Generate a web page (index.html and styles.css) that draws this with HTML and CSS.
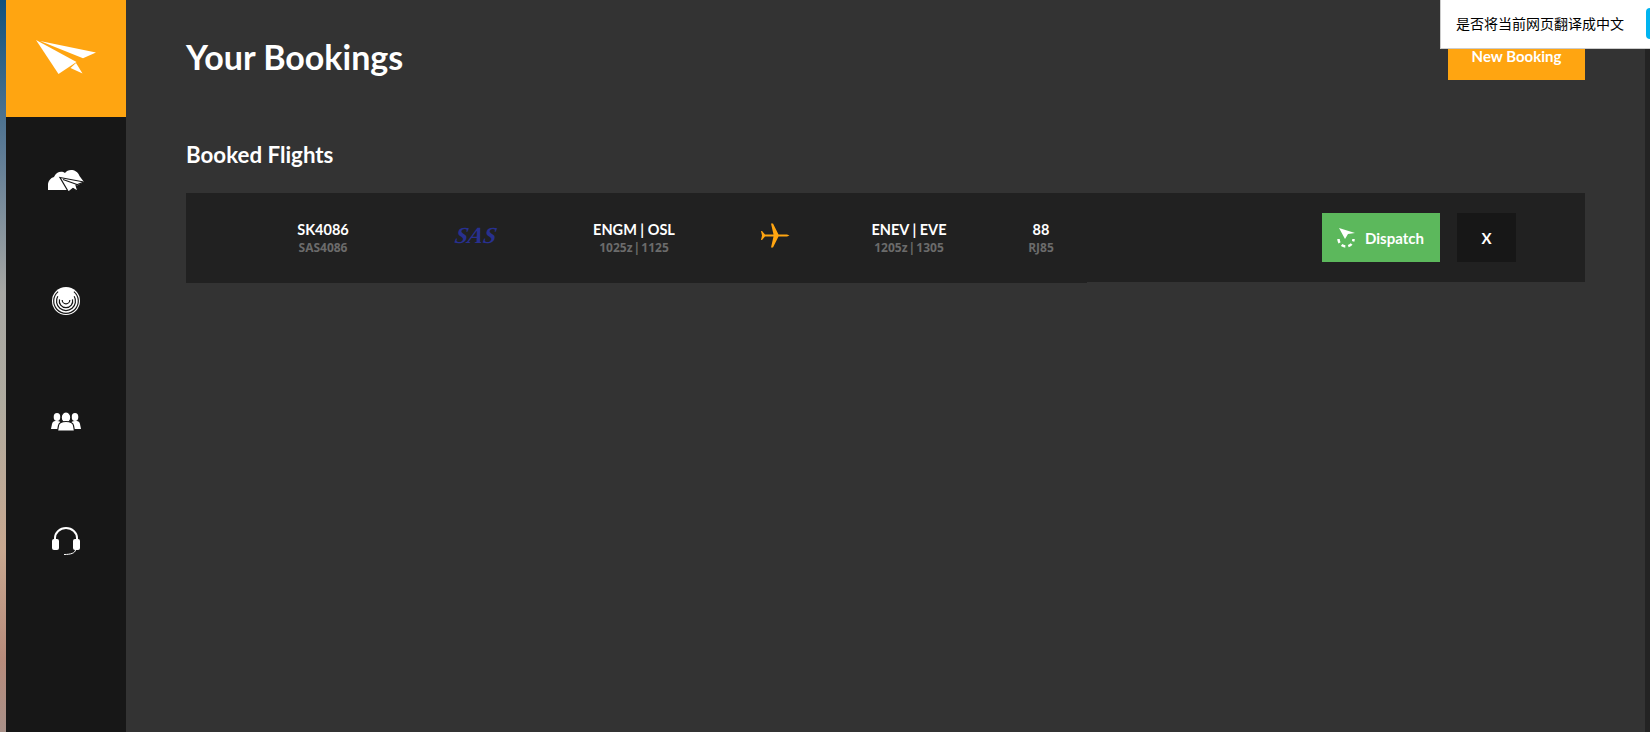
FILE: index.html
```html
<!DOCTYPE html>
<html lang="en">
<head>
    <meta charset="UTF-8">
    <title>Your Bookings</title>
    <link rel="stylesheet" href="styles.css">
</head>
<body>

<div class="app">
    <div class="wallpaper"></div>

    <div class="sidebar">
        <div class="logo">
            <svg width="60" height="34" viewBox="0 0 60 34">
                <path class="white" d="M0 0 L40.500 22 L22.500 34 Z"/>
                <path class="white" d="M4 1 L60 12.500 L47 18.300 Z"/>
                <path class="white" d="M40 23 L46.500 33.500 L34.500 28 Z"/>
            </svg>
        </div>
        <div class="nav">
            <div class="nav-item">
                <svg width="36" height="22" viewBox="0 0 36 22">
                    <path class="white" d="M0 20 V15 C0 11 2.500 8 6 7 C8 1.500 14 0.500 17 3 C20 -1.500 29 -1 31.500 6 L36 12 L20 20 Z"/>
                    <path class="white plane-cut" d="M12 7.500 L36 12 L28 15 L30 21.500 L25 18.500 L20.500 22 Z"/>
                    <path class="cut-line" d="M15 9.500 L29 14.500"/>
                </svg>
            </div>
            <div class="nav-item">
                <svg width="28" height="28" viewBox="0 0 28 28">
                    <circle class="white" cx="14" cy="14" r="14"/>
                    <path class="ring" d="M6.100 4.600 A12.300 12.300 0 1 0 21.900 4.600"/>
                    <path class="ring" d="M5.800 9.250 A9.500 9.500 0 1 0 22.200 9.250"/>
                    <path class="ring" d="M7.500 12.300 A6.700 6.700 0 1 0 20.500 12.300"/>
                    <path class="ring" d="M10.200 13 A3.800 3.800 0 0 0 17.800 13"/>
                </svg>
            </div>
            <div class="nav-item">
                <svg width="30" height="19" viewBox="0 0 30 19">
                    <ellipse class="white" cx="6" cy="5" rx="3.300" ry="4"/>
                    <path class="white" d="M0 17 L1 12 C1.500 9.500 3 9 6 9 C9 9 10 10 10 12 L9 17 Z"/>
                    <ellipse class="white" cx="24" cy="5" rx="3.300" ry="4"/>
                    <path class="white" d="M30 17 L29 12 C28.500 9.500 27 9 24 9 C21 9 20 10 20 12 L21 17 Z"/>
                    <ellipse class="white plane-cut" cx="15" cy="5.500" rx="4.800" ry="5.500"/>
                    <path class="white plane-cut" d="M6.500 19 L7.500 13.500 C8 10.500 11 9.500 15 9.500 C19 9.500 22 10.500 22.500 13.500 L23.500 19 Z"/>
                </svg>
            </div>
            <div class="nav-item">
                <svg width="28" height="29" viewBox="0 0 28 29">
                    <path class="band" d="M3 13 V11 A11 10 0 0 1 25 11 V13"/>
                    <rect class="white" x="0" y="12" width="7" height="11" rx="2"/>
                    <rect class="white" x="21" y="12" width="7" height="11" rx="2"/>
                    <path class="mic" d="M23.500 23 C23 26 19 27.500 12 27.500"/>
                </svg>
            </div>
        </div>
    </div>

    <div class="main">
        <div class="page-head">
            <h1>Your Bookings</h1>
            <button class="new-booking">New Booking</button>
        </div>

        <h2>Booked Flights</h2>

        <div class="booking">
            <div class="booking-info">
                <div class="cell flight">
                    <p class="top">SK4086</p>
                    <p class="sub">SAS4086</p>
                </div>
                <div class="airline">SAS</div>
                <div class="cell dep">
                    <p class="top">ENGM | OSL</p>
                    <p class="sub">1025z | 1125</p>
                </div>
                <div class="plane">
                    <svg width="30" height="25" viewBox="0 0 30 25">
                        <path class="orange" d="M29.500 12.500 L27 11.500 H18.500 L13 0.500 H11 L13.500 11.500 H5 L2 8 H1 L2 12.500 L1 17 H2 L5 13.500 H13.500 L11 24.500 H13 L18.500 13.500 H27 Z"/>
                    </svg>
                </div>
                <div class="cell arr">
                    <p class="top">ENEV | EVE</p>
                    <p class="sub">1205z | 1305</p>
                </div>
                <div class="cell seats">
                    <p class="top">88</p>
                    <p class="sub">RJ85</p>
                </div>
            </div>
            <div class="actions">
                <button class="dispatch">
                    <svg width="18" height="20" viewBox="0 0 18 20">
                        <path class="white" d="M2 0 L18 5 L11 6 L8 11 Z"/>
                        <path class="dash" d="M1.500 11 A7.500 7.500 0 0 0 16.500 11"/>
                    </svg>
                    Dispatch
                </button>
                <button class="cancel">X</button>
            </div>
        </div>
    </div>

    <div class="scrollbar"></div>

    <div class="translate-bar">
        <span>是否将当前网页翻译成中文</span>
        <div class="translate-btn"></div>
    </div>
</div>

</body>
</html>
```

FILE: styles.css
```css
* {
    margin: 0;
    padding: 0;
    box-sizing: border-box;
}

body {
    background: #333333;
    font-family: Lato, sans-serif;
    overflow: hidden;
}

.white {
    fill: #ffffff;
}

.orange {
    fill: #ffa511;
}

.plane-cut {
    stroke: #171717;
    stroke-width: 1.2;
}

.cut-line {
    fill: none;
    stroke: #171717;
    stroke-width: 1.2;
}

.ring {
    fill: none;
    stroke: #171717;
    stroke-width: 1.2;
}

.band {
    fill: none;
    stroke: #ffffff;
    stroke-width: 2;
}

.mic {
    fill: none;
    stroke: #ffffff;
    stroke-width: 1;
}

.dash {
    fill: none;
    stroke: #ffffff;
    stroke-width: 2.5;
    stroke-dasharray: 4 3;
}

.app {
    display: flex;
    height: 732px;
    position: relative;
}

.wallpaper {
    width: 6px;
    background: linear-gradient(#12527c 0%, #5b7a95 20%, #a8a8a4 40%, #b0aca0 55%, #c8a890 75%, #b88c7c 90%, #a89088 100%);
}

.sidebar {
    width: 120px;
    background: #171717;
}

.logo {
    height: 117px;
    padding-bottom: 3px;
    background: #ffa511;
    display: flex;
    align-items: center;
    justify-content: center;
}

.nav {
    display: flex;
    flex-direction: column;
    padding-top: 4px;
}

.nav-item {
    height: 120px;
    display: flex;
    align-items: center;
    justify-content: center;
}

.main {
    flex: 1;
    padding: 0 60px 0 60px;
}

.scrollbar {
    width: 5px;
    background: #232323;
}

.page-head {
    height: 80px;
    display: flex;
    justify-content: space-between;
    align-items: flex-end;
}

h1 {
    color: #ffffff;
    font-size: 34px;
    font-weight: 700;
    line-height: 40px;
    margin-bottom: 3px;
}

.new-booking {
    width: 137px;
    height: 48px;
    background: #ffa511;
    color: #ffffff;
    border: none;
    font-family: Lato, sans-serif;
    font-size: 15px;
    font-weight: 700;
}

h2 {
    color: #ffffff;
    font-size: 22.300px;
    font-weight: 700;
    line-height: 28px;
    margin-top: 61px;
    margin-bottom: 24px;
}

.booking {
    height: 89px;
    background: #212121;
    display: flex;
    justify-content: space-between;
    align-items: flex-start;
}

/* the left part of the row sits 1px lower than the rest */
.booking-info {
    width: 901px;
    height: 90px;
    background: #212121;
    display: flex;
    align-items: center;
}

.cell {
    text-align: center;
}

.flight {
    width: 120px;
    margin-left: 77px;
}

.airline {
    width: 60px;
    margin-left: 63px;
    margin-bottom: 4px;
    color: #28308f;
    font-family: "Liberation Serif", serif;
    font-size: 23px;
    font-style: italic;
    font-weight: 700;
    text-align: center;
    transform: skewX(-12deg);
}

.dep {
    width: 120px;
    margin-left: 68px;
}

.plane {
    width: 30px;
    margin-left: 66px;
    align-self: flex-start;
    margin-top: 30px;
    display: flex;
}

.arr {
    width: 120px;
    margin-left: 59px;
}

.seats {
    width: 60px;
    margin-left: 42px;
}

.top {
    color: #ffffff;
    font-size: 14.500px;
    font-weight: 700;
    line-height: 18px;
}

.sub {
    color: #6b6b6b;
    font-family: "Open Sans", sans-serif;
    font-size: 12px;
    font-weight: 700;
    line-height: 17px;
    word-spacing: -2px;
}

.actions {
    margin-right: 69px;
    margin-top: 20px;
    display: flex;
    gap: 17px;
}

.dispatch {
    width: 118px;
    height: 49px;
    padding-left: 15px;
    background: #5cb85c;
    color: #ffffff;
    border: none;
    font-family: Lato, sans-serif;
    font-size: 15px;
    font-weight: 700;
    display: flex;
    align-items: center;
    gap: 10px;
}

.cancel {
    width: 59px;
    height: 49px;
    background: #171717;
    color: #ffffff;
    border: none;
    font-family: Lato, sans-serif;
    font-size: 15px;
    font-weight: 700;
}

.translate-bar {
    position: absolute;
    top: 0;
    right: 0;
    width: 210px;
    height: 49px;
    background: #ffffff;
    border-left: 1px solid #cccccc;
    border-bottom: 1px solid #cccccc;
    display: flex;
    align-items: center;
    justify-content: space-between;
    padding: 0 0 2px 15px;
    font-family: "Noto Sans CJK SC", sans-serif;
    font-size: 14px;
    color: #000000;
}

.translate-btn {
    width: 4px;
    height: 31px;
    background: #00b4f0;
    border-radius: 4px 0 0 4px;
}
```
